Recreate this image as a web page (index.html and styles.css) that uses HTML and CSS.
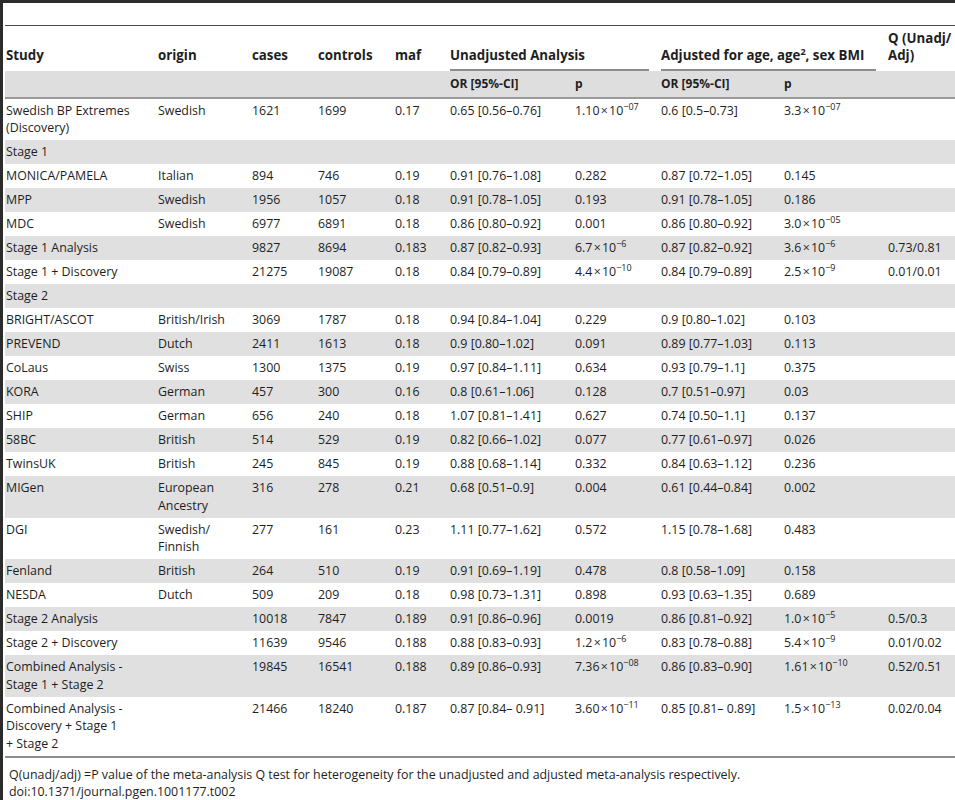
FILE: index.html
```html
<!DOCTYPE html>
<html>
<head>
<meta charset="utf-8">
<link rel="stylesheet" href="styles.css">
</head>
<body>
<div class="frame">
  <table class="data">
    <colgroup>
      <col class="c1"><col class="c2"><col class="c3"><col class="c4"><col class="c5">
      <col class="c6"><col class="c7"><col class="c8"><col class="c9"><col class="c10">
    </colgroup>
    <thead>
      <tr class="head-main">
        <th>Study</th>
        <th>origin</th>
        <th>cases</th>
        <th>controls</th>
        <th>maf</th>
        <th colspan="2" class="grp"><div class="grp-label">Unadjusted Analysis</div></th>
        <th colspan="2" class="grp"><div class="grp-label">Adjusted for age, age<sup>2</sup>, sex BMI</div></th>
        <th>Q (Unadj/<br>Adj)</th>
      </tr>
      <tr class="head-sub">
        <th></th><th></th><th></th><th></th><th></th>
        <th>OR [95%-CI]</th><th>p</th><th>OR [95%-CI]</th><th>p</th><th></th>
      </tr>
    </thead>
    <tbody>
      <tr><td>Swedish BP Extremes<br>(Discovery)</td><td>Swedish</td><td>1621</td><td>1699</td><td>0.17</td><td>0.65 [0.56–0.76]</td><td>1.10&#8202;×&#8202;10<sup>−07</sup></td><td>0.6 [0.5–0.73]</td><td>3.3&#8202;×&#8202;10<sup>−07</sup></td><td></td></tr>
      <tr><td>Stage 1</td><td></td><td></td><td></td><td></td><td></td><td></td><td></td><td></td><td></td></tr>
      <tr><td>MONICA/PAMELA</td><td>Italian</td><td>894</td><td>746</td><td>0.19</td><td>0.91 [0.76–1.08]</td><td>0.282</td><td>0.87 [0.72–1.05]</td><td>0.145</td><td></td></tr>
      <tr><td>MPP</td><td>Swedish</td><td>1956</td><td>1057</td><td>0.18</td><td>0.91 [0.78–1.05]</td><td>0.193</td><td>0.91 [0.78–1.05]</td><td>0.186</td><td></td></tr>
      <tr><td>MDC</td><td>Swedish</td><td>6977</td><td>6891</td><td>0.18</td><td>0.86 [0.80–0.92]</td><td>0.001</td><td>0.86 [0.80–0.92]</td><td>3.0&#8202;×&#8202;10<sup>−05</sup></td><td></td></tr>
      <tr><td>Stage 1 Analysis</td><td></td><td>9827</td><td>8694</td><td>0.183</td><td>0.87 [0.82–0.93]</td><td>6.7&#8202;×&#8202;10<sup>−6</sup></td><td>0.87 [0.82–0.92]</td><td>3.6&#8202;×&#8202;10<sup>−6</sup></td><td>0.73/0.81</td></tr>
      <tr><td>Stage 1 + Discovery</td><td></td><td>21275</td><td>19087</td><td>0.18</td><td>0.84 [0.79–0.89]</td><td>4.4&#8202;×&#8202;10<sup>−10</sup></td><td>0.84 [0.79–0.89]</td><td>2.5&#8202;×&#8202;10<sup>−9</sup></td><td>0.01/0.01</td></tr>
      <tr><td>Stage 2</td><td></td><td></td><td></td><td></td><td></td><td></td><td></td><td></td><td></td></tr>
      <tr><td>BRIGHT/ASCOT</td><td>British/Irish</td><td>3069</td><td>1787</td><td>0.18</td><td>0.94 [0.84–1.04]</td><td>0.229</td><td>0.9 [0.80–1.02]</td><td>0.103</td><td></td></tr>
      <tr><td>PREVEND</td><td>Dutch</td><td>2411</td><td>1613</td><td>0.18</td><td>0.9 [0.80–1.02]</td><td>0.091</td><td>0.89 [0.77–1.03]</td><td>0.113</td><td></td></tr>
      <tr><td>CoLaus</td><td>Swiss</td><td>1300</td><td>1375</td><td>0.19</td><td>0.97 [0.84–1.11]</td><td>0.634</td><td>0.93 [0.79–1.1]</td><td>0.375</td><td></td></tr>
      <tr><td>KORA</td><td>German</td><td>457</td><td>300</td><td>0.16</td><td>0.8 [0.61–1.06]</td><td>0.128</td><td>0.7 [0.51–0.97]</td><td>0.03</td><td></td></tr>
      <tr><td>SHIP</td><td>German</td><td>656</td><td>240</td><td>0.18</td><td>1.07 [0.81–1.41]</td><td>0.627</td><td>0.74 [0.50–1.1]</td><td>0.137</td><td></td></tr>
      <tr><td>58BC</td><td>British</td><td>514</td><td>529</td><td>0.19</td><td>0.82 [0.66–1.02]</td><td>0.077</td><td>0.77 [0.61–0.97]</td><td>0.026</td><td></td></tr>
      <tr><td>TwinsUK</td><td>British</td><td>245</td><td>845</td><td>0.19</td><td>0.88 [0.68–1.14]</td><td>0.332</td><td>0.84 [0.63–1.12]</td><td>0.236</td><td></td></tr>
      <tr><td>MIGen</td><td>European<br>Ancestry</td><td>316</td><td>278</td><td>0.21</td><td>0.68 [0.51–0.9]</td><td>0.004</td><td>0.61 [0.44–0.84]</td><td>0.002</td><td></td></tr>
      <tr><td>DGI</td><td>Swedish/<br>Finnish</td><td>277</td><td>161</td><td>0.23</td><td>1.11 [0.77–1.62]</td><td>0.572</td><td>1.15 [0.78–1.68]</td><td>0.483</td><td></td></tr>
      <tr><td>Fenland</td><td>British</td><td>264</td><td>510</td><td>0.19</td><td>0.91 [0.69–1.19]</td><td>0.478</td><td>0.8 [0.58–1.09]</td><td>0.158</td><td></td></tr>
      <tr><td>NESDA</td><td>Dutch</td><td>509</td><td>209</td><td>0.18</td><td>0.98 [0.73–1.31]</td><td>0.898</td><td>0.93 [0.63–1.35]</td><td>0.689</td><td></td></tr>
      <tr><td>Stage 2 Analysis</td><td></td><td>10018</td><td>7847</td><td>0.189</td><td>0.91 [0.86–0.96]</td><td>0.0019</td><td>0.86 [0.81–0.92]</td><td>1.0&#8202;×&#8202;10<sup>−5</sup></td><td>0.5/0.3</td></tr>
      <tr><td>Stage 2 + Discovery</td><td></td><td>11639</td><td>9546</td><td>0.188</td><td>0.88 [0.83–0.93]</td><td>1.2&#8202;×&#8202;10<sup>−6</sup></td><td>0.83 [0.78–0.88]</td><td>5.4&#8202;×&#8202;10<sup>−9</sup></td><td>0.01/0.02</td></tr>
      <tr><td>Combined Analysis -<br>Stage 1 + Stage 2</td><td></td><td>19845</td><td>16541</td><td>0.188</td><td>0.89 [0.86–0.93]</td><td>7.36&#8202;×&#8202;10<sup>−08</sup></td><td>0.86 [0.83–0.90]</td><td>1.61&#8202;×&#8202;10<sup>−10</sup></td><td>0.52/0.51</td></tr>
      <tr><td>Combined Analysis -<br>Discovery + Stage 1<br>+ Stage 2</td><td></td><td>21466</td><td>18240</td><td>0.187</td><td>0.87 [0.84– 0.91]</td><td>3.60&#8202;×&#8202;10<sup>−11</sup></td><td>0.85 [0.81– 0.89]</td><td>1.5&#8202;×&#8202;10<sup>−13</sup></td><td>0.02/0.04</td></tr>
    </tbody>
  </table>
  <div class="notes">
    <p>Q(unadj/adj) =P value of the meta-analysis Q test for heterogeneity for the unadjusted and adjusted meta-analysis respectively.</p>
    <p>doi:10.1371/journal.pgen.1001177.t002</p>
  </div>
</div>
</body>
</html>
```

FILE: styles.css
```css
html, body {
  margin: 0;
  padding: 0;
  background: #ffffff;
}

body {
  font-family: "Open Sans", "Liberation Sans", sans-serif;
  font-size: 12.4px;
  color: #1e1e1e;
}

.frame {
  box-sizing: border-box;
  min-height: 800px;
  border-top: 3px solid #2b2b2b;
  border-left: 3px solid #2b2b2b;
  padding-top: 22px;
}

.data {
  margin-left: 2px;
  width: 950px;
  table-layout: fixed;
  border-collapse: collapse;
  border-top: 1px solid #4a4a4a;
  border-bottom: 2px solid #8c8c8c;
}

.c1 { width: 153px; }
.c2 { width: 94px; }
.c3 { width: 66px; }
.c4 { width: 77px; }
.c5 { width: 55px; }
.c6 { width: 125px; }
.c7 { width: 86px; }
.c8 { width: 123px; }
.c9 { width: 104px; }
.c10 { width: 67px; }

th, td {
  text-align: left;
  vertical-align: top;
  padding: 3.25px 8px 3.25px 0;
  line-height: 17.5px;
  white-space: nowrap;
}

th:first-child, td:first-child {
  padding-left: 1px;
}

th {
  font-weight: bold;
}

.head-main th {
  font-size: 13.3px;
  line-height: 16.5px;
  vertical-align: bottom;
  padding-top: 4px;
  padding-bottom: 8px;
}

.head-main th.grp {
  padding-bottom: 0;
  padding-right: 0;
}

.grp-label {
  margin-right: 12px;
  padding-bottom: 6px;
  border-bottom: 2px solid #8c8c8c;
}

.head-sub th {
  font-size: 12px;
  background: #dedede;
  padding-top: 4px;
  padding-bottom: 4px;
  border-bottom: 2px solid #9a9a9a;
}

tbody tr:nth-child(even) td {
  background: #e0e0e0;
}

sup {
  font-size: 9px;
  line-height: 0;
  vertical-align: 5px;
}

.notes {
  padding: 8px 0 0 6px;
}

.notes p {
  margin: 0;
  line-height: 17.5px;
}
```
